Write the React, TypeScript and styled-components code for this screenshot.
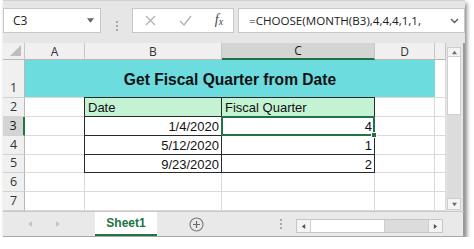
import { Fragment } from 'react';
import styled, { createGlobalStyle } from 'styled-components';

const GlobalStyle = createGlobalStyle`
  html, body {
    margin: 0;
    padding: 0;
    background: #fff;
  }
  body {
    font-family: "Open Sans", "Noto Sans", sans-serif;
  }
  * {
    box-sizing: border-box;
  }
`;

const GREEN = `#217346`;

const Window = styled.div`
  width: 462px;
  margin-left: 3px;
  display: flex;
  flex-direction: column;
  background: #e6e6e6;
  border-top: 1px solid #d0d0d0;
  box-shadow: 2px 3px 4px rgba(0, 0, 0, 0.45);
`;

const FormulaBar = styled.div`
  height: 42px;
  padding-top: 7px;
  display: flex;
  align-items: flex-start;
`;

const NameBox = styled.div`
  width: 98px;
  height: 25px;
  display: flex;
  align-items: center;
  justify-content: space-between;
  padding: 0 6px 0 9px;
  background: #fff;
  border: 1px solid #c8c8c8;
  font-size: 12px;
  color: #222;
`;

const Grip = styled.div<{ $width: number; $pad?: number }>`
  width: ${(p) => p.$width}px;
  height: 100%;
  display: flex;
  align-items: center;
  justify-content: ${(p) => (p.$pad ? `flex-end` : `center`)};
  padding-right: ${(p) => p.$pad || 0}px;
`;

const FuncBox = styled.div`
  width: 102px;
  height: 25px;
  display: grid;
  grid-template-columns: 34px 36px 32px;
  align-items: center;
  justify-items: center;
  background: #fff;
  border: 1px solid #c8c8c8;
`;

const Fx = styled.span`
  font-family: "Liberation Serif", serif;
  font-style: italic;
  font-size: 14px;
  line-height: 14px;
  color: #444;
  span {
    font-size: 10px;
    vertical-align: -1px;
  }
`;

const FormulaInput = styled.div`
  flex: 1;
  margin-left: 4px;
  height: 25px;
  display: flex;
  align-items: center;
  justify-content: space-between;
  padding: 0 5px 0 10px;
  background: #fff;
  border: 1px solid #c8c8c8;
  font-size: 11.6px;
  color: #222;
`;

const Body = styled.div`
  height: 168px;
  display: flex;
`;

const Sheet = styled.div`
  display: grid;
  grid-template-columns: 22px 60px 137px 153px 60px 11px;
  grid-template-rows: 17px 38px 19px 19px 19px 18px 19px 19px;
  background: #fff;
`;

const Corner = styled.div`
  display: flex;
  align-items: flex-end;
  justify-content: flex-end;
  padding: 0 3px 3px 0;
  background: #f0f0f0;
  border-right: 1px solid #c6c6c6;
  border-bottom: 1px solid #b8b8b8;
`;

const ColHeader = styled.div<{ $active?: boolean }>`
  display: flex;
  align-items: center;
  justify-content: center;
  font-size: 12px;
  color: ${(p) => (p.$active ? `#1a1a1a` : `#333`)};
  background: ${(p) => (p.$active ? `#d4d4d4` : `#f0f0f0`)};
  border-right: 1px solid #c6c6c6;
  border-bottom: ${(p) => (p.$active ? `2px solid ${GREEN}` : `1px solid #b8b8b8`)};
`;

const RowHeader = styled.div<{ $active?: boolean }>`
  display: flex;
  align-items: flex-end;
  justify-content: center;
  font-size: 12.5px;
  color: ${(p) => (p.$active ? `#1a1a1a` : `#333`)};
  background: ${(p) => (p.$active ? `#d4d4d4` : `#f0f0f0`)};
  border-right: ${(p) => (p.$active ? `2px solid ${GREEN}` : `1px solid #b8b8b8`)};
  border-bottom: 1px solid #d2d2d2;
  line-height: 18px;
`;

const Title = styled.div`
  grid-column: 2 / span 4;
  display: flex;
  align-items: flex-end;
  justify-content: center;
  padding-bottom: 8px;
  background: #6cdcdf;
  border-bottom: 1px solid #d8d8d8;
  font-family: "Liberation Sans", Arial, sans-serif;
  font-weight: 700;
  font-size: 15.6px;
  color: #111;
`;

type Kind = `plain` | `boxed` | `head` | `selected`;

const Cell = styled.div<{ $kind: Kind; $right?: boolean }>`
  position: relative;
  display: flex;
  align-items: center;
  justify-content: ${(p) => (p.$right ? `flex-end` : `flex-start`)};
  padding: 1px 2px 0 3px;
  font-family: "Liberation Sans", Arial, sans-serif;
  font-size: 13px;
  color: #111;
  white-space: nowrap;
  border-right: 1px solid #dadada;
  border-bottom: 1px solid #dadada;
  ${(p) =>
    p.$kind !== `plain` &&
    `
    margin: -1px 0 0 -1px;
    z-index: 1;
    border: 1px solid #2a2a2a;
  `}
  ${(p) => p.$kind === `head` && `background: #c3f3d2;`}
  ${(p) =>
    p.$kind === `selected` &&
    `
    z-index: 2;
    border: 2px solid ${GREEN};
    padding-right: 1px;
  `}
`;

const FillHandle = styled.span`
  position: absolute;
  right: -4px;
  bottom: -4px;
  width: 6px;
  height: 6px;
  background: ${GREEN};
  border: 1px solid #fff;
`;

const VScroll = styled.div`
  flex: 1;
  display: flex;
  flex-direction: column;
  padding: 4px 2px 1px 1px;
  border-right: 2px solid #9a9a9a;
`;

const ScrollBtn = styled.div<{ $h: number }>`
  height: ${(p) => p.$h}px;
  display: flex;
  align-items: center;
  justify-content: center;
  background: #f4f4f4;
  border: 1px solid #cfcfcf;
`;

const VThumb = styled.div`
  height: 58px;
  background: #fff;
  border: 1px solid #cfcfcf;
  border-top: none;
`;

const VTrack = styled.div`
  flex: 1;
  background: #dcdcdc;
`;

const TabBar = styled.div`
  height: 26px;
  display: flex;
  background: #e9e9e9;
  border-top: 1px solid #c8c8c8;
  border-right: 2px solid #9a9a9a;
  border-bottom: 1px solid #a8a8a8;
`;

const Nav = styled.div`
  width: 92px;
  display: flex;
  align-items: center;
  gap: 22px;
  padding-left: 24px;
`;

const SheetTab = styled.div`
  width: 62px;
  height: 24px;
  display: flex;
  align-items: center;
  justify-content: center;
  background: #fff;
  border-bottom: 2px solid ${GREEN};
  font-family: "Liberation Sans", Arial, sans-serif;
  font-weight: 700;
  font-size: 12px;
  color: ${GREEN};
`;

const AddArea = styled.div`
  width: 78px;
  display: flex;
  align-items: center;
  justify-content: center;
`;

const HScroll = styled.div`
  width: 147px;
  height: 14px;
  margin-top: 7px;
  display: flex;
  background: #dcdcdc;
  border: 1px solid #c6c6c6;
`;

const HBtn = styled.div`
  width: 13px;
  display: flex;
  align-items: center;
  justify-content: center;
  background: #f4f4f4;
`;

const HThumb = styled.div`
  width: 75px;
  background: #fff;
  border-left: 1px solid #cfcfcf;
  border-right: 1px solid #cfcfcf;
`;

const HTrack = styled.div`
  flex: 1;
  border-right: 1px solid #cfcfcf;
`;

const Dots = () => (
  <svg width="2" height="10" viewBox="0 0 2 10">
    <rect x="0" y="0" width="2" height="2" fill="#a8a8a8" />
    <rect x="0" y="4" width="2" height="2" fill="#a8a8a8" />
    <rect x="0" y="8" width="2" height="2" fill="#a8a8a8" />
  </svg>
);

const Tri = ({ dir, color = `#6a6a6a`, size = 6 }: { dir: string; color?: string; size?: number }) => {
  const paths: Record<string, string> = {
    down: `M0 1h6L3 5z`,
    up: `M0 5h6L3 1z`,
    left: `M5 0v6L1 3z`,
    right: `M1 0v6L5 3z`,
  };
  return (
    <svg width={size} height={size} viewBox="0 0 6 6">
      <path d={paths[dir]} fill={color} />
    </svg>
  );
};

const rows = [
  { n: 2, b: `Date`, c: `Fiscal Quarter`, kind: `head` as Kind },
  { n: 3, b: `1/4/2020`, c: `4`, kind: `boxed` as Kind, selected: true },
  { n: 4, b: `5/12/2020`, c: `1`, kind: `boxed` as Kind },
  { n: 5, b: `9/23/2020`, c: `2`, kind: `boxed` as Kind },
  { n: 6 },
  { n: 7 },
];

export default function App() {
  return (
    <>
      <GlobalStyle />
      <Window>
        <FormulaBar>
          <NameBox>
            <span>C3</span>
            <Tri dir="down" color="#666" size={7} />
          </NameBox>
          <Grip $width={31}>
            <Dots />
          </Grip>
          <FuncBox>
            <svg width="11" height="11" viewBox="0 0 11 11">
              <path d="M1 1L10 10M10 1L1 10" stroke="#b0b0b0" strokeWidth="1.2" />
            </svg>
            <svg width="13" height="11" viewBox="0 0 13 11">
              <path d="M1 6l4 4 7-9" stroke="#b0b0b0" strokeWidth="1.3" fill="none" />
            </svg>
            <Fx>
              f<span>x</span>
            </Fx>
          </FuncBox>
          <FormulaInput>
            <span>=CHOOSE(MONTH(B3),4,4,4,1,1,</span>
            <svg width="9" height="6" viewBox="0 0 9 6">
              <path d="M1 1l3.5 3.5L8 1" stroke="#555" strokeWidth="1.3" fill="none" />
            </svg>
          </FormulaInput>
        </FormulaBar>

        <Body>
          <Sheet>
            <Corner>
              <svg width="11" height="11" viewBox="0 0 11 11">
                <path d="M11 0v11H0z" fill="#bdbdbd" />
              </svg>
            </Corner>
            <ColHeader>A</ColHeader>
            <ColHeader>B</ColHeader>
            <ColHeader $active>C</ColHeader>
            <ColHeader>D</ColHeader>
            <ColHeader />

            <RowHeader>1</RowHeader>
            <Title>Get Fiscal Quarter from Date</Title>
            <Cell $kind="plain" />

            {rows.map((r) => (
              <Fragment key={r.n}>
                <RowHeader $active={r.selected}>{r.n}</RowHeader>
                <Cell $kind="plain" />
                <Cell $kind={r.kind || `plain`} $right={r.kind === `boxed`}>
                  {r.b}
                </Cell>
                <Cell $kind={r.selected ? `selected` : r.kind || `plain`} $right={r.kind === `boxed`}>
                  {r.c}
                  {r.selected && <FillHandle />}
                </Cell>
                <Cell $kind="plain" />
                <Cell $kind="plain" />
              </Fragment>
            ))}
          </Sheet>
          <VScroll>
            <ScrollBtn $h={10}>
              <Tri dir="up" size={5} />
            </ScrollBtn>
            <VThumb />
            <VTrack />
            <ScrollBtn $h={12}>
              <Tri dir="down" size={5} />
            </ScrollBtn>
          </VScroll>
        </Body>

        <TabBar>
          <Nav>
            <Tri dir="left" color="#c4c4c4" size={6} />
            <Tri dir="right" color="#c4c4c4" size={6} />
          </Nav>
          <SheetTab>Sheet1</SheetTab>
          <AddArea>
            <svg width="15" height="15" viewBox="0 0 15 15">
              <circle cx="7.5" cy="7.5" r="6.5" stroke="#7a7a7a" strokeWidth="1.1" fill="none" />
              <path d="M7.5 4v7M4 7.5h7" stroke="#6a6a6a" strokeWidth="1.2" />
            </svg>
          </AddArea>
          <Grip $width={61} $pad={14}>
            <Dots />
          </Grip>
          <HScroll>
            <HBtn>
              <Tri dir="left" size={5} color="#555" />
            </HBtn>
            <HThumb />
            <HTrack />
            <HBtn>
              <Tri dir="right" size={5} color="#555" />
            </HBtn>
          </HScroll>
        </TabBar>
      </Window>
    </>
  );
}
